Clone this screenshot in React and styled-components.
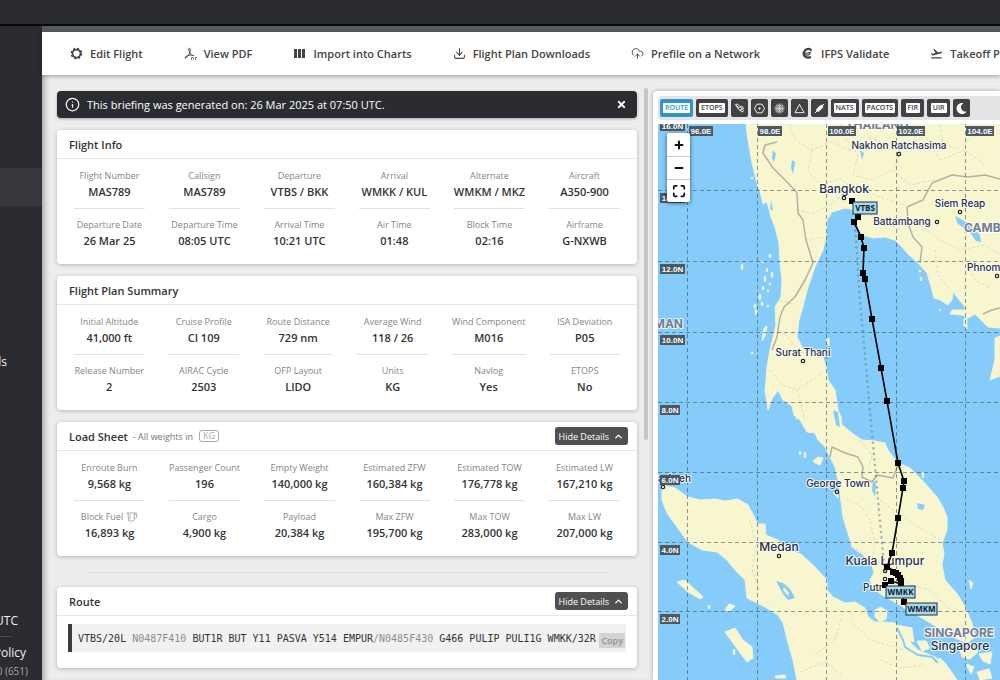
import React from "react";
import styled, { createGlobalStyle } from "styled-components";
import { Info, Download, CloudUpload, ChevronUp, Maximize, Plus, Minus } from "lucide-react";
import { MdFlightTakeoff } from "react-icons/md";
import { FaTimes, FaMoon } from "react-icons/fa";

const GlobalStyle = createGlobalStyle`
  * { box-sizing: border-box; }
  body {
    margin: 0;
    font-family: "Open Sans", "Noto Sans", sans-serif;
    font-size: 11px;
    color: #3a3a3d;
    background: #ededee;
  }
  button { font-family: inherit; border: 0; cursor: pointer; }
  h2, p, dl, dt, dd { margin: 0; }
`;

const Page = styled.div`
  display: flex;
  flex-direction: column;
  height: 100vh;
  overflow: hidden;
`;
const TopBar = styled.header`
  flex: 0 0 26px;
  background: #2b2c31;
  border-bottom: 2px solid #08080a;
`;
const Body = styled.div`
  display: flex;
  flex: 1;
  min-height: 0;
`;
const Sidebar = styled.aside`
  flex: 0 0 42px;
  display: flex;
  flex-direction: column;
  overflow: hidden;
  background: #2b2c31;
  color: #f0f0f2;
`;
const SideItem = styled.a`
  display: flex;
  align-items: center;
  justify-content: flex-end;
  flex: 0 0 38px;
  padding-right: 35px;
  font-size: 12px;
  white-space: nowrap;
  color: inherit;
  text-decoration: none;
  margin-top: ${(p) => p.$top || 0}px;
  background: ${(p) => (p.$active ? "#37383e" : "transparent")};
`;
const SideFoot = styled.div`
  margin-top: auto;
  display: flex;
  flex-direction: column;
  align-items: flex-end;
  padding: 0 14px 0 0;
  white-space: nowrap;
`;
const Clock = styled.div`
  font-size: 12px;
  line-height: 16px;
  padding-right: 10px;
`;
const SideRule = styled.div`
  width: 40px;
  height: 1px;
  margin: 7px 16px 7px 0;
  background: #4c4d52;
`;
const PolicyLink = styled.a`
  font-size: 12px;
  font-weight: 500;
  line-height: 18px;
  padding-right: 2px;
  color: inherit;
  text-decoration: none;
`;
const Version = styled.div`
  font-size: 10px;
  line-height: 18px;
  color: #a5a5aa;
`;

const Main = styled.main`
  position: relative;
  flex: 1;
  min-width: 0;
  display: flex;
  flex-direction: column;
  box-shadow: inset 6px 0 6px -4px rgba(0, 0, 0, 0.35);
`;
const Strip = styled.div`
  flex: 0 0 6px;
  background: #5a5d5f;
`;
const Nav = styled.nav`
  position: relative;
  z-index: 1;
  flex: none;
  background: #fff;
  box-shadow: 0 1px 5px rgba(0, 0, 0, 0.35);
`;
const NavRow = styled.div`
  display: flex;
  align-items: center;
  gap: 41px;
  height: 43px;
  padding-left: 28px;
  overflow: hidden;
`;
const NavLink = styled.a`
  display: flex;
  align-items: center;
  gap: 7px;
  flex: none;
  font-size: 11px;
  font-weight: 600;
  color: #444;
  text-decoration: none;
  white-space: nowrap;
  svg { width: 13px; height: 13px; }
`;
const Columns = styled.div`
  flex: 1;
  min-height: 0;
  display: grid;
  grid-template-columns: minmax(0, 611fr) minmax(0, 347fr);
`;
const LeftPane = styled.div`
  display: flex;
  gap: 7px;
  padding: 16px 5px 0 15px;
  min-height: 0;
`;
const Stack = styled.div`
  flex: 1;
  min-width: 0;
  display: flex;
  flex-direction: column;
  gap: 12px;
`;
const ScrollTrack = styled.div`
  flex: 0 0 4px;
  margin-top: -3px;
`;
const ScrollThumb = styled.div`
  height: 352px;
  border-radius: 2px;
  background: #c5c5c9;
`;

const Banner = styled.div`
  display: flex;
  align-items: center;
  gap: 7px;
  flex: 0 0 27px;
  padding: 0 10px 0 8px;
  border-radius: 4px;
  background: #2b2c31;
  color: #fff;
  font-weight: 500;
  box-shadow: 0 1px 3px rgba(0, 0, 0, 0.3);
  p { flex: 1; }
`;
const CloseButton = styled.button`
  display: flex;
  padding: 0;
  background: none;
  color: #fff;
`;
const Card = styled.section`
  flex: none;
  border-radius: 4px;
  background: #fff;
  box-shadow: 0 1px 4px rgba(0, 0, 0, 0.24);
`;
const CardHead = styled.header`
  display: flex;
  align-items: center;
  height: 29px;
  padding: 0 9px 0 12px;
  border-bottom: 1px solid #e6e6e8;
  h2 { font-size: 11px; font-weight: 600; color: #333; }
`;
const HeadNote = styled.span`
  flex: 1;
  display: flex;
  align-items: center;
  gap: 6px;
  padding-left: 5px;
  font-size: 9px;
  color: #777;
`;
const UnitTag = styled.span`
  padding: 0 3px;
  border: 1px solid #aaa;
  border-radius: 3px;
  font-size: 9px;
  line-height: 10px;
  color: #aaa;
`;
const HideButton = styled.button`
  display: flex;
  align-items: center;
  gap: 4px;
  height: 18px;
  padding: 0 4px;
  border-radius: 3px;
  background: #505052;
  color: #fff;
  font-size: 9px;
  font-weight: 500;
  white-space: nowrap;
`;
const Facts = styled.dl`
  display: grid;
  grid-template-columns: repeat(6, 1fr);
  padding: 8px 5px 0;
  height: 105px;
`;
const Fact = styled.div`
  height: 42px;
  margin: 0 12px 7px;
  display: flex;
  flex-direction: column;
  align-items: center;
  white-space: nowrap;
  border-bottom: 1px solid ${(p) => (p.$last ? "transparent" : "#e2e2e4")};
  dt {
    display: flex;
    align-items: center;
    gap: 3px;
    font-size: 9px;
    line-height: 18px;
    color: #858589;
  }
  dd { font-size: 11px; line-height: 13px; font-weight: 600; color: #333; }
`;
const Divider = styled.hr`
  flex: none;
  width: calc(100% - 60px);
  height: 1px;
  margin: 4px auto 2px;
  border: 0;
  background: #dcdcde;
`;
const RouteBody = styled.div`
  padding: 8px 11px 16px;
`;
const RouteBox = styled.div`
  display: flex;
  align-items: center;
  height: 28px;
  padding: 0 1px 0 6px;
  border-left: 4px solid #3b3b3d;
  background: #f1f1f2;
  code {
    flex: 1;
    font-family: "DejaVu Sans Mono", "Liberation Mono", monospace;
    font-size: 10px;
    white-space: nowrap;
    color: #333;
  }
  i { font-style: normal; color: #8c8c90; }
`;
const CopyButton = styled.button`
  height: 15px;
  margin-top: 4px;
  padding: 0 2px;
  background: #d3d3d5;
  color: #8e8e92;
  font-size: 9px;
  font-weight: 600;
  line-height: 15px;
`;

const MapPanel = styled.section`
  display: flex;
  flex-direction: column;
  margin-top: 16px;
  padding: 5px 0 0 5px;
  border-radius: 4px 0 0 0;
  background: #fff;
  box-shadow: 0 0 4px rgba(0, 0, 0, 0.3);
  min-height: 0;
  overflow: hidden;
`;
const MapTools = styled.div`
  display: flex;
  align-items: center;
  gap: 3px;
  flex: 0 0 24px;
  margin-bottom: 4px;
  padding-left: 2px;
  border-radius: 4px 0 0 4px;
  background: #e4e4e7;
`;
const ToolButton = styled.button`
  display: flex;
  align-items: center;
  justify-content: center;
  height: 18px;
  min-width: ${(p) => (p.$text ? 23 : 17)}px;
  padding: 0 ${(p) => (p.$text ? 3 : 0)}px;
  border-radius: 2px;
  background: ${(p) => (p.$on ? "#3096c6" : "#424244")};
  color: ${(p) => (p.$on ? "#3096c6" : "#424244")};
  span {
    padding: 0 2px;
    border-radius: 1px;
    background: #fff;
    font-size: 7px;
    line-height: 10px;
    font-weight: 600;
  }
  svg { color: #fff; width: 11px; height: 11px; }
`;
const MapArea = styled.div`
  position: relative;
  flex: 1;
  min-height: 0;
  overflow: hidden;
  background: #86ccfa;
  svg.chart { display: block; width: 100%; height: 100%; }
`;
const ZoomBox = styled.div`
  position: absolute;
  left: 9px;
  top: 9px;
  width: 23px;
  border-radius: 2px;
  overflow: hidden;
  box-shadow: 0 1px 4px rgba(0, 0, 0, 0.6);
`;
const ZoomButton = styled.button`
  display: flex;
  align-items: center;
  justify-content: center;
  width: 100%;
  height: 23px;
  padding: 0;
  background: #fff;
  color: #111;
  & + & { border-top: 1px solid #ccc; }
`;

const GearIcon = () => (
  <svg viewBox="0 0 26 26" fill="none" stroke="currentColor">
    <circle cx="13" cy="13" r="8" strokeWidth="3.500" />
    <circle cx="13" cy="13" r="10.500" strokeWidth="2.500" strokeDasharray="4.200 4.047" />
  </svg>
);
const PdfIcon = () => (
  <svg viewBox="0 0 26 26" fill="none" stroke="currentColor" strokeWidth="2">
    <path d="M11 2c-3 0-1 7 1 10 2 4 5 6 8 5M12 3c2 4-1 11-5 16-3 4-6 4-5 2 2-3 8-5 13-5" />
    <path d="M15 21v5M15 21h3M19 21v4M23 21v5M23 21h3" strokeWidth="1.5" />
  </svg>
);
const BarsIcon = () => (
  <svg viewBox="0 0 13 13" fill="currentColor">
    <path d="M1 2h3v9H1zM5 2h3v9H5zM9 2h3v9H9z" />
  </svg>
);
const EuroIcon = () => (
  <svg viewBox="0 0 26 26" fill="none" stroke="currentColor">
    <path d="M21 7C17 2 8 3 6 11c-2 8 5 12 14 9" strokeWidth="4.500" />
    <path d="M3 12c7 2 13 0 17-2M4 16c7 1 12 0 15-3" strokeWidth="2.5" />
  </svg>
);
const CloudIcon = () => <CloudUpload strokeWidth={1.7} />;
const CupIcon = () => (
  <svg width="12" height="10" viewBox="0 0 24 20" fill="none" stroke="#a5a5a8" strokeWidth="1.8">
    <path d="M1 2h21M4 2l1 15c4 2 7 2 11 0l1-15M17 5h5l-1 6-4 3M8 5v10" />
  </svg>
);
const SatelliteIcon = () => (
  <svg viewBox="0 0 24 24" fill="none" stroke="currentColor" strokeWidth="2">
    <path d="M3 4l4-2 6 6-4 4zM9 12l4 5 5-5-5-4M14 8c4-2 6 1 7 5M13 14l4 6 4-3-5-5M5 5l5 5" />
  </svg>
);
const HexIcon = () => (
  <svg viewBox="0 0 24 24" fill="none" stroke="currentColor" strokeWidth="2">
    <path d="M6.500 2.500h11L23 12l-5.500 9.500h-11L1 12z" />
    <circle cx="12" cy="12" r="1.500" fill="currentColor" />
  </svg>
);
const RadarIcon = () => (
  <svg viewBox="0 0 24 24" fill="none" stroke="currentColor">
    <circle cx="12" cy="12" r="10" strokeWidth="1" />
    <circle cx="12" cy="12" r="7" strokeWidth="1.500" />
    <circle cx="12" cy="12" r="4" strokeWidth="1.500" />
    <circle cx="12" cy="12" r="1.500" fill="currentColor" />
    <path d="M12 2v20M2 12h20M5 5l14 14M19 5L5 19" strokeWidth="0.800" />
  </svg>
);
const TriangleIcon = () => (
  <svg viewBox="0 0 24 24" fill="none" stroke="currentColor" strokeWidth="2">
    <path d="M12 3L22 21H2z" />
  </svg>
);
const FlareIcon = () => (
  <svg viewBox="0 0 24 24" fill="currentColor" stroke="currentColor">
    <path d="M2 22L22 2" strokeWidth="2" />
    <path d="M19 4l-6 2-8 8 1 5 5-1 8-8z" />
  </svg>
);

const NAV = [
  [GearIcon, "Edit Flight"],
  [PdfIcon, "View PDF"],
  [BarsIcon, "Import into Charts"],
  [Download, "Flight Plan Downloads"],
  [CloudIcon, "Prefile on a Network"],
  [EuroIcon, "IFPS Validate"],
  [MdFlightTakeoff, "Takeoff P"],
];

const INFO = [
  ["Flight Number", "MAS789"], ["Callsign", "MAS789"], ["Departure", "VTBS / BKK"],
  ["Arrival", "WMKK / KUL"], ["Alternate", "WMKM / MKZ"], ["Aircraft", "A350-900"],
  ["Departure Date", "26 Mar 25"], ["Departure Time", "08:05 UTC"], ["Arrival Time", "10:21 UTC"],
  ["Air Time", "01:48"], ["Block Time", "02:16"], ["Airframe", "G-NXWB"],
];
const SUMMARY = [
  ["Initial Altitude", "41,000 ft"], ["Cruise Profile", "CI 109"], ["Route Distance", "729 nm"],
  ["Average Wind", "118 / 26"], ["Wind Component", "M016"], ["ISA Deviation", "P05"],
  ["Release Number", "2"], ["AIRAC Cycle", "2503"], ["OFP Layout", "LIDO"],
  ["Units", "KG"], ["Navlog", "Yes"], ["ETOPS", "No"],
];
const LOAD = [
  ["Enroute Burn", "9,568 kg"], ["Passenger Count", "196"], ["Empty Weight", "140,000 kg"],
  ["Estimated ZFW", "160,384 kg"], ["Estimated TOW", "176,778 kg"], ["Estimated LW", "167,210 kg"],
  ["Block Fuel", "16,893 kg", CupIcon], ["Cargo", "4,900 kg"], ["Payload", "20,384 kg"],
  ["Max ZFW", "195,700 kg"], ["Max TOW", "283,000 kg"], ["Max LW", "207,000 kg"],
];

const TOOLS = [
  { text: "ROUTE", on: true }, { text: "ETOPS" },
  { icon: SatelliteIcon, name: "Satellite" }, { icon: HexIcon, name: "Navaids" },
  { icon: RadarIcon, name: "Radar" }, { icon: TriangleIcon, name: "Waypoints" },
  { icon: FlareIcon, name: "Winds" },
  { text: "NATS" }, { text: "PACOTS" }, { text: "FIR" }, { text: "UIR" },
  { icon: FaMoon, name: "Night mode" },
];

const FactGrid = ({ items }) => (
  <Facts>
    {items.map(([label, value, Icon], i) => (
      <Fact key={label} $last={i > 5}>
        <dt>{label}{Icon && <Icon />}</dt>
        <dd>{value}</dd>
      </Fact>
    ))}
  </Facts>
);
const HideDetails = () => (
  <HideButton type="button">Hide Details<ChevronUp size={11} strokeWidth={3} /></HideButton>
);

const LAND = [
  "M746,124 748,140 752,163 757,183 761,195 763,204 767,202 771,217 775,227 779,243 780,263 782,280 781,297 775,307 776,325 770,350 767,367 766,380 765,390 768,410 772,399 778,390 783,400 792,406 794,415 800,420 807,432 815,433 818,440 825,447 830,457 835,467 838,480 840,493 843,517 848,533 852,547 863,555 871,562 874,573 870,580 873,588 882,595 893,601 908,610 922,618 942,630 955,638 967,643 975,637 972,623 965,607 958,595 945,580 942,565 944,553 942,543 947,530 947,517 943,507 937,497 922,480 910,468 898,463 888,450 885,443 875,441 862,440 852,433 842,425 841,417 838,410 835,390 828,380 826,367 823,357 815,350 808,352 802,347 797,337 799,320 802,310 808,287 815,267 823,250 826,237 827,220 832,212 845,208 855,210 856,222 862,235 873,238 885,237 895,240 902,247 907,253 918,263 927,273 932,290 934,298 940,300 948,305 952,300 953,292 957,297 965,307 965,310 952,310 950,314 962,315 968,318 975,314 983,322 988,327 1000,328 1000,124Z",
  "M1000,336 995,338 995,360 990,380 1000,376Z",
  "M662,485 675,488 688,497 700,500 715,499 725,501 738,499 748,505 755,518 757,524 765,524 766,535 778,540 788,548 802,555 815,567 827,580 827,590 833,597 845,603 855,602 865,608 868,617 875,622 885,622 895,623 900,630 908,640 918,650 935,657 948,667 957,680 797,680 793,660 788,643 783,623 778,615 765,607 747,598 745,580 735,570 727,560 717,552 702,550 688,542 677,527 667,513 662,500Z",
  "M725,632 735,628 743,640 752,647 753,658 747,662 738,650Z",
  "M677,582 685,580 703,597 700,599 688,592Z",
  "M725,610 729,604 735,606 730,611Z", "M775,676 785,675 786,678 776,678Z",
  "M875,610 881,607 887,611 886,619 880,622 875,617Z",
  "M897,625 912,628 914,642 906,640Z", "M917,641 926,641 930,648 922,651Z",
  "M764,328 767,326 765,336 762,341Z", "M813,461 818,457 823,458 820,465 815,463Z",
  "M831,668 837,671 834,673Z", "M960,650 972,646 978,652 970,659 962,657Z",
  "M979,654 992,652 990,664 983,661Z", "M966,664 974,667 971,674Z", "M977,672 989,669 992,678 980,680Z",
  "M935,662 940,658 947,665 942,670Z", "M771,600 775,603 773,606Z", "M969,580 973,583 971,589Z",
  "M833,493 838,490 838,498Z", "M826,340 829,338 829,346Z", "M964,319 967,318 967,329 964,326Z",
];
const ISLETS = [
  [763,262],[767,270],[765,279],[770,284],[763,288],[760,297],[768,291],[762,304],[772,275],[768,306],[770,256],
  [742,267],[752,178],[755,306],[756,312],[797,418],[800,453],[805,455],[752,353],[709,607],[734,652],[920,271],[917,258],[923,475],[940,310],[921,279],
];
const WATER = [
  "M955,216 961,219 969,225 980,235 981,242 976,241 969,231 958,224Z",
  "M776,581 783,583 790,589 795,598 788,600 783,594Z",
  "M792,160 795,162 793,174 791,168Z", "M773,150 776,154 774,162 772,158Z",
  "M860,150 864,153 862,160Z", "M917,503 925,505 923,510 918,509Z", "M833,410 838,412 840,427 836,425Z",
  "M873,480 876,484 875,497 872,490Z", "M771,200 770,209 773,211Z",
];
const BORDERS = [
  "M777,142 765,145 763,153 773,168 788,183 797,193 798,213 803,220 806,240 813,263 805,280 795,297 784,307 780,317 777,337 772,350",
  "M1000,179 985,175 968,177 952,175 932,183 923,200 907,207 908,223 913,237 922,247 920,263",
  "M983,314 992,310 1000,308", "M830,457 832,447 845,453 858,457 863,467 862,477 872,482 877,475 893,478 898,465",
];
const PROVINCES = [
  "M790,124 795,140 812,150 830,142 850,150 870,138 900,150 925,135 940,160 965,150 985,165",
  "M840,124 846,140 858,155 853,175 872,180 893,170 910,185 935,180", "M812,150 808,172 822,185 840,178 853,190",
  "M797,210 812,214 828,206 842,196 856,187 880,197 905,205", "M900,150 895,170M940,124 942,140 956,150 980,132",
  "M870,215 885,222 900,230M806,240 823,237M780,300 795,305M781,330 790,340 800,352 820,355",
  "M770,370 783,385 797,390 812,380 823,372M797,390 805,420M920,225 940,240 960,250 985,245 1000,255M935,250 938,275 950,290M965,260 975,280 990,288",
  "M846,500 860,505 870,520 875,545 872,560M880,500 900,515 915,525 940,540M852,546 875,560 895,570 910,585 930,590 950,610M860,440 872,455 868,470",
  "M750,520 756,545 752,570 760,590M815,655 835,640 842,615M800,672 825,662 842,675M850,620 870,640 905,650M880,660 900,668 925,665",
];
const LON = [687, 757, 826, 896, 965];
const LAT = [190, 261, 332, 402, 472, 542, 611];
const WAYPOINTS = [
  [852,201],[858,205],[858,217],[854,222],[861,237],[864,248],[863,273],[865,279],[872,319],[881,368],
  [887,401],[898,463],[904,481],[903,488],[898,518],[892,553],[887,567],
];
const ARRIVAL = [[893,572],[896,573],[898,575],[900,578],[901,581],[901,585],[891,581],[885,585],[904,602]];
const PLACES = [
  ["Nakhon Ratchasima", 899, 149, 10, "middle"], ["Bangkok", 844, 193, 12, "middle"],
  ["Siem Reap", 960, 207, 10, "middle"], ["Battambang", 902, 225, 10, "middle"],
  ["Phnom", 967, 271, 10, "start"], ["Surat Thani", 803, 356, 10, "middle"],
  ["George Town", 838, 487, 10, "middle"], ["Medan", 779, 551, 12, "middle"],
  ["Kuala Lumpur", 885, 565, 12, "middle"], ["Putr", 863, 591, 10, "start"],
  ["Banda Aceh", 691, 482, 10, "end"], ["Singapore", 960, 650, 12, "middle"],
];
const DOTS = [[899,154],[844,198],[960,212],[937,222],[997,276],[803,361],[837,492],[779,556],[885,571],[885,579],[663,487]];
const COUNTRIES = [["THAILAND", 877, 129, "middle"], ["MAN", 683, 328, "end"], ["CAMB", 964, 232, "start"], ["SINGAPORE", 959, 637, "middle"]];
const GRID_LABELS = [
  ["16.0N", 660, 121, 25], ["14.0N", 660, 193, 25], ["12.0N", 660, 264, 25], ["10.0N", 660, 335, 25],
  ["8.0N", 660, 405, 20], ["6.0N", 660, 475, 20], ["4.0N", 660, 545, 20], ["2.0N", 660, 614, 20],
  ["96.0E", 689, 126, 24], ["98.0E", 758, 126, 24], ["100.0E", 828, 126, 28], ["102.0E", 897, 126, 28], ["104.0E", 966, 126, 28],
];
const AIRPORTS = [["VTBS", 853, 202, 24], ["WMKK", 886, 586, 29], ["WMKM", 906, 603, 31]];

const Chart = () => (
  <svg className="chart" viewBox="658 124 342 556" preserveAspectRatio="xMinYMin slice" role="img" aria-label="Route map">
    <g fill="#f7f6cf" stroke="#f2f4d8" strokeWidth="1" strokeLinejoin="round">
      {LAND.map((d) => <path key={d} d={d} />)}
      {ISLETS.map(([x, y], i) => <ellipse key={i} cx={x} cy={y} rx="0.8" ry={1 + (i % 3)} />)}
    </g>
    <g fill="#86ccfa">{WATER.map((d) => <path key={d} d={d} />)}</g>
    <path d="M784,587l5,6l-1,3l-5,-6z" fill="#f7f6cf" />
    <path d="M897,628 903,640 905,647 918,655 932,657 938,663" fill="none" stroke="#86ccfa" strokeWidth="2" />
    <g fill="none" stroke="#dcdac0" strokeWidth="1" strokeDasharray="3 2">{PROVINCES.map((d) => <path key={d} d={d} />)}</g>
    <g fill="none" stroke="#b3b1a4" strokeWidth="1.500" strokeLinejoin="round">{BORDERS.map((d) => <path key={d} d={d} />)}</g>
    <g stroke="#3f5560" strokeOpacity="0.6" strokeWidth="1" strokeDasharray="4 3" shapeRendering="crispEdges">
      {LON.map((x) => <path key={x} d={`M${x},124V680`} />)}
      {LAT.map((y) => <path key={y} d={`M658,${y}H1000`} />)}
    </g>
    <g fontFamily="Inter, 'Open Sans', sans-serif" stroke="#fff" strokeOpacity="0.85" strokeWidth="2" strokeLinejoin="round" paintOrder="stroke">
      {COUNTRIES.map(([t, x, y, a]) => (
        <text key={t} x={x} y={y} textAnchor={a} fontSize="12" fontWeight="700" fill="#747c91">{t}</text>
      ))}
      {PLACES.map(([t, x, y, s, a]) => (
        <text key={t} x={x} y={y} textAnchor={a} fontSize={s} fontWeight="500" fill="#263046">{t}</text>
      ))}
    </g>
    <g fill="#fff" stroke="#222" strokeWidth="1.200">
      {DOTS.map(([x, y], i) => <circle key={i} cx={x} cy={y} r="1.700" />)}
    </g>
    <path d="M855,225L860,300L872,433L878,500L885,575" fill="none" stroke="#5f7f8c" strokeOpacity="0.55" strokeWidth="2.500" strokeLinecap="round" strokeDasharray="0.1 5.500" />
    <polyline points={WAYPOINTS.join(" ")} fill="none" stroke="#000" strokeWidth="1.600" />
    <path d="M887,567L894,571L901,579V584L891,581L885,585M901,584L904,602" fill="none" stroke="#000" strokeWidth="1.600" />
    {[...WAYPOINTS, ...ARRIVAL].map(([x, y], i) => <rect key={i} x={x - 3} y={y - 3} width="6" height="6" />)}
    {GRID_LABELS.map(([t, x, y, w]) => (
      <g key={t}>
        <rect x={x} y={y} width={w} height="10" fill="#4b5960" />
        <text x={x + w / 2} y={y + 8} textAnchor="middle" fontFamily="Liberation Sans, sans-serif" fontSize="8" fontWeight="700" fill="#fff">{t}</text>
      </g>
    ))}
    {AIRPORTS.map(([t, x, y, w]) => (
      <g key={t}>
        <rect x={x} y={y} width={w} height="12" fill="#a9d8ee" stroke="#1c3440" />
        <text x={x + w / 2} y={y + 9} textAnchor="middle" fontSize="8" fontWeight="700" fill="#10202a">{t}</text>
      </g>
    ))}
  </svg>
);

export default function App() {
  return (
    <Page>
      <GlobalStyle />
      <TopBar />
      <Body>
        <Sidebar>
          <SideItem href="#" $active $top={142} aria-label="Current briefing" />
          <SideItem href="#" $top={136}>ls</SideItem>
          <SideFoot>
            <Clock>UTC</Clock>
            <SideRule />
            <PolicyLink href="#">Policy</PolicyLink>
            <Version>0 (651)</Version>
          </SideFoot>
        </Sidebar>
        <Main>
          <Strip />
          <Nav>
            <NavRow>
              {NAV.map(([Icon, label]) => (
                <NavLink href="#" key={label}><Icon />{label}</NavLink>
              ))}
            </NavRow>
          </Nav>
          <Columns>
            <LeftPane>
              <Stack>
                <Banner role="status">
                  <Info size={15} strokeWidth={2} />
                  <p>This briefing was generated on: 26 Mar 2025 at 07:50 UTC.</p>
                  <CloseButton type="button" aria-label="Close"><FaTimes size={11} /></CloseButton>
                </Banner>
                <Card>
                  <CardHead><h2>Flight Info</h2></CardHead>
                  <FactGrid items={INFO} />
                </Card>
                <Card>
                  <CardHead><h2>Flight Plan Summary</h2></CardHead>
                  <FactGrid items={SUMMARY} />
                </Card>
                <Card>
                  <CardHead>
                    <h2>Load Sheet</h2>
                    <HeadNote>- All weights in <UnitTag>KG</UnitTag></HeadNote>
                    <HideDetails />
                  </CardHead>
                  <FactGrid items={LOAD} />
                </Card>
                <Divider />
                <Card>
                  <CardHead><h2>Route</h2><HeadNote /><HideDetails /></CardHead>
                  <RouteBody>
                    <RouteBox>
                      <code>VTBS/20L <i>N0487F410</i> BUT1R BUT Y11 PASVA Y514 EMPUR<i>/N0485F430</i> G466 PULIP PULI1G WMKK/32R</code>
                      <CopyButton type="button">Copy</CopyButton>
                    </RouteBox>
                  </RouteBody>
                </Card>
              </Stack>
              <ScrollTrack><ScrollThumb /></ScrollTrack>
            </LeftPane>
            <MapPanel>
              <MapTools>
                {TOOLS.map(({ text, icon: Icon, name, on }) => (
                  <ToolButton type="button" key={text || name} $text={!!text} $on={on} aria-label={text || name}>
                    {text ? <span>{text}</span> : <Icon />}
                  </ToolButton>
                ))}
              </MapTools>
              <MapArea>
                <Chart />
                <ZoomBox>
                  <ZoomButton type="button" aria-label="Zoom in"><Plus size={12} strokeWidth={4} /></ZoomButton>
                  <ZoomButton type="button" aria-label="Zoom out"><Minus size={12} strokeWidth={4} /></ZoomButton>
                  <ZoomButton type="button" aria-label="Full screen"><Maximize size={14} strokeWidth={3} /></ZoomButton>
                </ZoomBox>
              </MapArea>
            </MapPanel>
          </Columns>
        </Main>
      </Body>
    </Page>
  );
}
